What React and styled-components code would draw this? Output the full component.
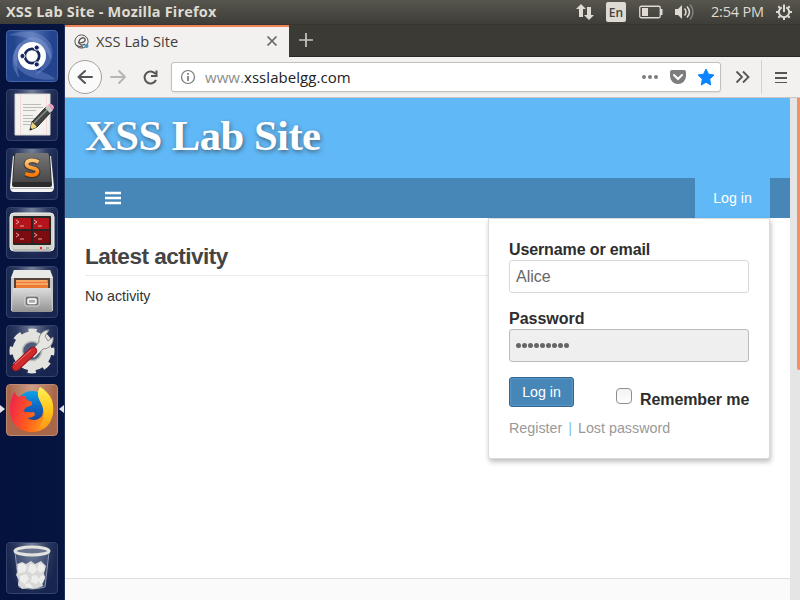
import React from "react";
import styled, { createGlobalStyle, css } from "styled-components";

const Global = createGlobalStyle`
  * { box-sizing: border-box; }
  html, body { margin: 0; overflow: hidden; }
  svg { display: block; flex: none; }
`;

const Desktop = styled.div`
  width: 800px;
  height: 600px;
  display: flex;
  flex-direction: column;
  overflow: hidden;
  background: #071640;
  font-family: "Liberation Sans", Arial, sans-serif;
`;

const TopPanel = styled.header`
  height: 24px;
  flex: none;
  display: flex;
  align-items: center;
  padding: 0 8px 0 6px;
  background: linear-gradient(#57554d, #3e3d38);
  color: #dfdbd2;
  font-family: "Open Sans", "Noto Sans", sans-serif;
`;

const WindowTitle = styled.div`
  flex: 1;
  font-size: 14.5px;
  font-weight: 700;
  line-height: 24px;
  letter-spacing: 0.19px;
  white-space: nowrap;
`;

const Indicators = styled.div`
  display: flex;
  align-items: center;
`;

const Language = styled.span`
  width: 20px;
  height: 20px;
  margin: 0 13px 0 12px;
  border-radius: 2px;
  background: #dfdbd2;
  color: #45443f;
  font: 600 12px/21px "Open Sans", sans-serif;
  text-align: center;
`;

const Volume = styled.div`
  margin-left: 12px;
`;

const Clock = styled.span`
  width: 53px;
  margin: 0 12px 0 16px;
  font-size: 14.5px;
  line-height: 24px;
  letter-spacing: -0.2px;
  white-space: nowrap;
`;

const Workspace = styled.div`
  flex: 1;
  display: flex;
  min-height: 0;
`;

const Launcher = styled.nav`
  width: 65px;
  flex: none;
  display: flex;
  flex-direction: column;
  align-items: center;
  gap: 7px;
  padding: 6px 1px 6px 0;
  border-right: 1px solid #22305c;
  background: linear-gradient(90deg, #04123d, #051540);
`;

const Tile = styled.div`
  position: relative;
  width: 52px;
  height: 52px;
  flex: none;
  border-radius: 4px;
  border: 1px solid ${(p) => p.$edge || "#34426a"};
  background: ${(p) => p.$fill || "radial-gradient(ellipse at 50% 0, #77819b, #2b385f 45%, #18264f 75%)"};
  ${(p) => p.$last && css`margin-top: auto;`}
  & > svg { margin: -1px; }
`;

const Pip = styled.i`
  position: absolute;
  top: 20px;
  border: 4.5px solid transparent;
  ${(p) => (p.$right
    ? css`right: -7px; border-left: 0; border-right: 5px solid #e4e4e8;`
    : css`left: -7px; border-right: 0; border-left: 5px solid #e4e4e8;`)}
`;

const Browser = styled.main`
  flex: 1;
  min-width: 0;
  display: flex;
  flex-direction: column;
`;

const TabStrip = styled.div`
  height: 33px;
  flex: none;
  display: flex;
  background: #3b3a35;
  border-top: 1px solid #35342f;
  border-bottom: 1px solid #292824;
`;

const Tab = styled.div`
  width: 224px;
  height: 32px;
  display: flex;
  align-items: center;
  padding: 0 11px 2px 9px;
  border-top: 2px solid #f08354;
  background: #f3f1f0;
`;

const TabTitle = styled.span`
  flex: 1;
  margin-left: 7px;
  font: 14.6px/28px "Open Sans", sans-serif;
  letter-spacing: 0.05px;
  color: #3f3e3b;
`;

const NewTab = styled.div`
  padding: 8px 10px;
`;

const Toolbar = styled.div`
  height: 41px;
  flex: none;
  display: flex;
  align-items: center;
  padding-left: 3px;
  background: #f3f1f0;
  border-bottom: 1px solid #c6c5c3;
`;

const BackButton = styled.div`
  width: 34px;
  height: 34px;
  display: grid;
  place-items: center;
  border: 1px solid #a2a19f;
  border-radius: 50%;
  background: #fbfafa;
`;

const AddressBar = styled.div`
  width: 550px;
  height: 30px;
  margin-left: 12px;
  display: flex;
  align-items: center;
  padding: 0 5px 0 8px;
  border: 1px solid #c3c1be;
  border-radius: 3px;
  background: #fff;
  box-shadow: 0 1px 2px rgba(0, 0, 0, 0.08);
`;

const Address = styled.span`
  flex: 1;
  margin-left: 9px;
  font: 15px/28px "Open Sans", sans-serif;
  letter-spacing: 0.05px;
  color: #222;
  span { color: #8c8c8c; }
`;

const Divider = styled.i`
  width: 1px;
  height: 34px;
  margin: 0 13px 0 11px;
  background: #d5d3d1;
`;

const Viewport = styled.div`
  flex: 1;
  min-height: 0;
  display: flex;
`;

const Page = styled.div`
  width: 725px;
  display: flex;
  flex-direction: column;
  background: #fff;
`;

const Scrollbar = styled.div`
  width: 10px;
  padding-left: 7px;
  background: #e5e5e5;
  &::before {
    content: "";
    display: block;
    height: 272px;
    border-radius: 0 0 0 2px;
    background: #f19069;
  }
`;

const Banner = styled.div`
  height: 80px;
  flex: none;
  padding-left: 20px;
  background: #60b8f7;
`;

const SiteName = styled.h1`
  margin: 0;
  font: 700 42.7px/76px "Liberation Serif", serif;
  letter-spacing: -0.54px;
  color: #fff;
  text-shadow: 1px 2px 4px rgba(51, 51, 51, 0.6);
`;

const NavBar = styled.div`
  position: relative;
  z-index: 1;
  height: 40px;
  flex: none;
  display: flex;
  align-items: center;
  justify-content: space-between;
  padding: 0 20px 0 40px;
  background: #4787b8;
`;

const LoginTab = styled.div`
  width: 75px;
  text-align: center;
  font-size: 14.2px;
  line-height: 40px;
  color: #fff;
  background: #60b8f7;
`;

const Content = styled.section`
  flex: 1;
  padding: 24px 20px 0;
`;

const Heading = styled.h2`
  margin: 0;
  height: 34px;
  border-bottom: 1px solid #ebebeb;
  font: 700 22.6px/30px "Liberation Sans", sans-serif;
  letter-spacing: -0.52px;
  color: #444;
`;

const Note = styled.p`
  margin: 11px 0 0;
  font-size: 14.2px;
  line-height: 18px;
  color: #333;
`;

const Footer = styled.footer`
  height: 22px;
  border-top: 1px solid #dedede;
  background: #fafafa;
`;

const LoginBox = styled.form`
  position: absolute;
  top: 40px;
  right: 20px;
  width: 282px;
  height: 241px;
  padding: 20px;
  border: 1px solid #dbdbdb;
  border-radius: 0 0 3px 3px;
  background: #fff;
  box-shadow: 1px 3px 5px rgba(0, 0, 0, 0.25);
`;

const Label = styled.label`
  display: block;
  font-size: 16px;
  font-weight: 700;
  line-height: 21px;
  letter-spacing: ${(p) => p.$spacing || "0"};
  color: #2d2d2d;
  white-space: nowrap;
`;

const Field = styled.input`
  display: block;
  width: 240px;
  height: 33px;
  margin: 0 0 15px;
  padding: 0 6px;
  border: 1px solid #d8d8d8;
  border-radius: 3px;
  outline: 0;
  background: #fff;
  font: 16px "Liberation Sans", sans-serif;
  color: #666;
`;

const MaskedField = styled.div`
  display: flex;
  align-items: center;
  gap: 1px;
  width: 240px;
  height: 33px;
  margin-bottom: 15px;
  padding: 0 6px;
  border: 1px solid #bbb;
  border-radius: 3px;
  background: #efefef;
  i { width: 5px; height: 5px; border-radius: 50%; background: #666; }
`;

const Actions = styled.div`
  display: flex;
  align-items: flex-start;
`;

const Submit = styled.button`
  width: 65px;
  height: 30px;
  flex: none;
  padding: 0;
  border: 1px solid #2f6792;
  border-radius: 3px;
  background: #4787b8;
  box-shadow: inset 0 0 1px 1px #5b97c4;
  font: 14.2px "Liberation Sans", sans-serif;
  color: #fff;
`;

const Check = styled.i`
  width: 16px;
  height: 16px;
  flex: none;
  margin: 11px 8px 0 42px;
  border: 1px solid #8f8f8f;
  border-radius: 4px;
  background: linear-gradient(#f2f2f2, #fff);
`;

const Remember = styled.div`
  padding-top: 12px;
`;

const Links = styled.div`
  display: flex;
  gap: 6px;
  margin-top: 8px;
  font-size: 14.3px;
  line-height: 20px;
  color: #999;
  white-space: nowrap;
  i { font-style: normal; color: #7fbfe9; }
`;

const Glyph = ({ w, h = w, box, children, ...rest }) => (
  <svg width={w} height={h} viewBox={box || `0 0 ${w} ${h}`} fill="none" {...rest}>{children}</svg>
);

const DashIcon = () => (
  <Glyph w={52}>
    <g fill="#8fa8e2" stroke="#a9bdec" strokeWidth=".5">
      <path opacity=".38" d="M13 47C1 33 7 12 27 7c11 2 18 10 18 22-4-9-10-15-20-15C13 16 7 30 13 47Z" />
      <path opacity=".32" d="M4 5c14-6 32-3 40 8 6 14-1 26-14 31 8-7 10-14 7-21C33 12 20 5 4 5Z" />
      <path opacity=".3" d="M49 49C33 51 16 46 9 34c-3-9 0-16 5-21-1 9 1 18 8 23 8 5 18 6 27 13Z" />
    </g>
    <circle cx="26" cy="26" r="14" fill="#fff" />
    <circle cx="26" cy="26" r="7.2" stroke="#14275f" strokeWidth="2.7" />
    <g fill="#14275f" stroke="#fff" strokeWidth="1">
      <circle cx="16.5" cy="26" r="2.6" /><circle cx="30.7" cy="17.6" r="2.6" /><circle cx="30.7" cy="34.4" r="2.6" />
    </g>
  </Glyph>
);

const EditorIcon = () => (
  <Glyph w={52}>
    <path d="M9 5h35v41H9z" fill="#f3f2ee" stroke="#d7d7d4" />
    <path d="M14.500 5v41M40.500 5v41" stroke="#f3dada" />
    <path d="M17 15.500h18M17 18.500h20M17 21.500h13M17 26.500h10M17 29.500h16M17 32.500h13M17 35.500h10" stroke="#bcbcb8" />
    <path d="m24 41 2-8L40 18l5 5-14 15Z" fill="#444644" stroke="#20201f" />
    <path d="m28 34 13-13" stroke="#8b8c89" strokeWidth="1.500" />
    <path d="m24 41 2-8 5 5Z" fill="#ecd37c" />
    <path d="m23.500 41.500 3-1-2-2Z" fill="#222" />
    <path d="m39 19 3-3 5 5-3 3Z" fill="#c9cac9" />
    <path d="m42 16 2-1.500q4 1 4 4.500l-1.500 2Z" fill="#f29cb9" />
  </Glyph>
);

const SublimeIcon = () => (
  <Glyph w={52}>
    <defs>
      <linearGradient id="key" x2="0" y2="1"><stop stopColor="#777" /><stop offset="1" stopColor="#484848" /></linearGradient>
      <linearGradient id="ess" x2="0" y2="1"><stop stopColor="#ffc878" /><stop offset="1" stopColor="#ff7600" /></linearGradient>
    </defs>
    <path d="M7 8h38l3 31q0 5-4 5H8q-4 0-4-5Z" fill="#f4f4f2" />
    <path d="M5 40.500h42" stroke="#bbb" />
    <path d="M8 7q0-2 2-2h32q2 0 2 2l2 30q0 2-2 2H8q-2 0-2-2Z" fill="#2c2c2c" />
    <path d="M9 7q0-2 2-2h30q2 0 2 2l2 27H7Z" fill="url(#key)" />
    <path d="M32.500 14.500c-5-3-12-2-12 2 0 5 11 3 11 7 0 5-7 5-12 2.500" stroke="#20160c" strokeWidth="6" opacity=".35" />
    <path d="M32.500 14c-5-3-12-2-12 2 0 5 11 3 11 7 0 5-7 5-12 2.500" stroke="url(#ess)" strokeWidth="3.600" />
  </Glyph>
);

const TerminatorIcon = () => (
  <Glyph w={52}>
    <rect x="4" y="6" width="44" height="38" rx="4" fill="#d5d5ce" stroke="#f4f4ef" />
    <path d="M7 43h38" stroke="#999" />
    <rect x="7" y="9" width="38" height="29" rx="1" fill="#252525" />
    <path d="M8 11h17v11H8zM27 11h16v11H27z" fill="#b4151b" />
    <path d="M8 24h17v12H8zM27 24h16v12H27z" fill="#7d0c11" />
    <path d="m10 13 3 2-3 2m4 2h4m10-6 3 2-3 2m4 2h4M10 26l3 2-3 2m4 2h4m10-6 3 2-3 2m4 2h4" stroke="#f6c8c9" strokeWidth=".8" />
    <circle cx="35" cy="41" r="1.200" fill="#f22" /><path d="M40 40h3v2h-3z" fill="#aaa" />
  </Glyph>
);

const FilesIcon = () => (
  <Glyph w={52}>
    <defs><linearGradient id="cab" x2="0" y2="1"><stop stopColor="#ddd" /><stop offset="1" stopColor="#929292" /></linearGradient></defs>
    <path d="M8 4h36l3 8v33H5V12Z" fill="#c7c7c4" />
    <path d="M8 4h36l3 8H5Z" fill="#e9e9e6" />
    <path d="M8 12h36v11H8z" fill="#55433a" />
    <path d="M10 14h32v8H10z" fill="#ed7b30" /><path d="M10 15h31M10 18h32" stroke="#ffd39d" />
    <path d="M7 22h38l1 24H6Z" fill="url(#cab)" />
    <rect x="19" y="30" width="14" height="10" rx="2" fill="#777" stroke="#ddd" />
    <rect x="22" y="33" width="8" height="4.500" rx="1" fill="#aaa" stroke="#fff" strokeWidth="1.500" />
  </Glyph>
);

const SettingsIcon = () => (
  <Glyph w={52}>
    <circle cx="26" cy="26" r="14.500" stroke="#e2e2df" strokeWidth="10" />
    <circle cx="26" cy="26" r="20" stroke="#e2e2df" strokeWidth="5" strokeDasharray="8 7.700" strokeDashoffset="4" />
    <circle cx="26" cy="26" r="9.500" fill="#4c5a7e" stroke="#b8b8b5" strokeWidth="1.500" />
    <path d="m24 28 9-11c-1-7 4-12 10-12l-4 6 3 5 5-4c1 7-4 12-10 12L28 33Z" fill="#e5e5e2" stroke="#8e8e8b" />
    <path d="M10 42 27 26" stroke="#9b1218" strokeWidth="8.500" strokeLinecap="round" />
    <path d="M10 42 27 26" stroke="#cf2a2c" strokeWidth="6.500" strokeLinecap="round" />
    <path d="M9 39 25 25" stroke="#ef7776" strokeWidth="1" />
  </Glyph>
);

const FirefoxIcon = () => (
  <Glyph w={52}>
    <defs>
      <linearGradient id="globe" x2="0" y2="1"><stop stopColor="#0ba4e8" /><stop offset=".5" stopColor="#1166c4" /><stop offset="1" stopColor="#1b3f92" /></linearGradient>
      <linearGradient id="fox" x1="0" x2="1" y1=".4" y2=".7"><stop stopColor="#f0254b" /><stop offset=".45" stopColor="#ff5a1e" /><stop offset="1" stopColor="#ffb018" /></linearGradient>
      <linearGradient id="tail" x2="0" y2="1"><stop stopColor="#fff35b" /><stop offset=".5" stopColor="#ffc81c" /><stop offset="1" stopColor="#ff9a16" /></linearGradient>
    </defs>
    <circle cx="26" cy="23" r="16" fill="url(#globe)" />
    <path d="M9 8q1 4 4 5 3-2 6-1l2 4 5 2v3l-6 2.500-3 3.500q5 2 11 1l1 3q-3 3-8 3 9 5 15-2 3-8-2-16-1-8 0-13 13 8 13 18c2 16-7 27-21 27C12 48 4 38 4 26 4 17 6 12 9 8Z" fill="url(#fox)" />
    <path d="M34 3c10 6 14 14 13 25-1 8-6 15-15 17 6-7 8-17 3-26-4-7-4-11-1-16Z" fill="url(#tail)" />
  </Glyph>
);

const TrashIcon = () => (
  <Glyph w={52}>
    <path d="M9 10h34l-4 35q-13 4-26 0Z" fill="#8492ae" fillOpacity=".3" stroke="#8d98b2" />
    <path d="m11 22 5-2 4 2 5-3 4 3 6-3 5 5-2 7 1 6-3 3 1 4-5 2-5 1-5-1-6 1-4-4 1-5-3-5 2-5Z" fill="#d8d8d7" />
    <g fill="#ededec">
      <path d="m12 23 5-2 4 4-2 5-6 1-2-4ZM24 22l5 1 2 5-4 4-5-3ZM33 21l5 2 1 5-5 3-3-4ZM14 34l6-2 3 5-4 5-5-3ZM26 34l4-1 4 5-4 4-5-2ZM35 33l4 1-2 7-3 1-1-5ZM19 42l5-1 3 5-7-1Z" />
    </g>
    <ellipse cx="26" cy="9" rx="17" ry="4" fill="#68748f" stroke="#e3e3de" strokeWidth="3" />
  </Glyph>
);

export default function App() {
  return (
    <Desktop>
      <Global />
      <TopPanel>
        <WindowTitle>XSS Lab Site - Mozilla Firefox</WindowTitle>
        <Indicators>
          <Glyph w={18} h={18}><path d="m5 1 5 5H7v8H3V6H0Zm8 16-5-5h3V4h4v8h3Z" fill="#dfdbd2" /></Glyph>
          <Language>En</Language>
          <Glyph w={24} h={14}><rect x=".75" y="1.250" width="20.500" height="11.500" rx="1.500" stroke="#dfdbd2" strokeWidth="1.300" /><path d="M3 3h6v8H3zM21 4h2.500v6H21z" fill="#dfdbd2" /></Glyph>
          <Volume>
            <Glyph w={20} h={18}><path d="M0 6h3l4-4v14l-4-4H0Z" fill="#dfdbd2" /><path d="M9.500 5.500q3 3.500 0 7" stroke="#dfdbd2" strokeWidth="1.500" /><path d="M12 3.500q5 5.500 0 11" stroke="#dfdbd2" strokeWidth="1.500" /><path d="M15 1.500q6 7.500 0 15" stroke="#85827a" strokeWidth="1.500" /></Glyph>
          </Volume>
        </Indicators>
        <Clock>2:54 PM</Clock>
        <Glyph w={16} box="-8 -8 16 16" stroke="#dfdbd2" strokeWidth="2">
          <path d="M-2.200-4.700A5.200 5.200 0 1 0 2.200-4.700M0-7.500V0" />
          <path d="m-4-4-1.700-1.700M4-4l1.700-1.700M-5 0h-3M5 0h3M-4 4l-1.700 1.700M4 4l1.700 1.700M0 5v3" />
        </Glyph>
      </TopPanel>
      <Workspace>
        <Launcher>
          <Tile $edge="#4565a8" $fill="radial-gradient(ellipse at 50% 0, #5575b4, #2546929e 55%), #1d3e88"><DashIcon /></Tile>
          <Tile><EditorIcon /></Tile>
          <Tile><SublimeIcon /></Tile>
          <Tile><TerminatorIcon /></Tile>
          <Tile><FilesIcon /></Tile>
          <Tile><SettingsIcon /></Tile>
          <Tile $edge="#bd8871" $fill="radial-gradient(ellipse at 50% 0, #cfa08a, #a8674a 65%)"><FirefoxIcon /><Pip /><Pip $right /></Tile>
          <Tile $last><TrashIcon /></Tile>
        </Launcher>
        <Browser>
          <TabStrip>
            <Tab>
              <Glyph w={15}><circle cx="7.500" cy="7.500" r="6.600" stroke="#555" /><path d="M4 8.500c4 1 8-1 7-3.500s-6-1-6 3c0 3 3 4 6 2M2 11c3 2 4 2 7 2" stroke="#555" strokeWidth="1.300" /><circle cx="12.500" cy="12" r="2" fill="#3e94c6" /></Glyph>
              <TabTitle>XSS Lab Site</TabTitle>
              <Glyph w={12}><path d="m1.500 1.500 9 9m0-9-9 9" stroke="#666" strokeWidth="1.700" /></Glyph>
            </Tab>
            <NewTab><Glyph w={14}><path d="M7 0v14M0 7h14" stroke="#c9c8c2" strokeWidth="1.700" /></Glyph></NewTab>
          </TabStrip>
          <Toolbar>
            <BackButton><Glyph w={16}><path d="M15 8H1.500m6.500-6L1.500 8 8 14" stroke="#555" strokeWidth="2" strokeLinecap="round" strokeLinejoin="round" /></Glyph></BackButton>
            <Glyph w={32} h={16}><path d="M9 8h14m-6-6 6 6-6 6" stroke="#b7b6b4" strokeWidth="2" strokeLinecap="round" strokeLinejoin="round" /></Glyph>
            <Glyph w={25} h={16}><path d="M21.500 5A6 6 0 1 0 22 11M22.500 1.500V7H17" stroke="#555" strokeWidth="2" /></Glyph>
            <AddressBar>
              <Glyph w={16}><circle cx="8" cy="8" r="6.500" stroke="#777" strokeWidth="1.200" /><path d="M8 7v5M8 4v1.700" stroke="#777" strokeWidth="1.700" /></Glyph>
              <Address><span>www.</span>xsslabelgg.com</Address>
              <Glyph w={73} h={18}><g fill="#7d7d7d"><circle cx="2" cy="9" r="2" /><circle cx="8" cy="9" r="2" /><circle cx="14" cy="9" r="2" /><path d="M30 2h12q2 0 2 2v4a8 8 0 0 1-16 0V4q0-2 2-2Z" /></g><path d="m32 7 4 4 4-4" stroke="#fff" strokeWidth="2" strokeLinecap="round" /><path d="m64 1 2.500 5.200 5.500.8-4.300 4 1 6-4.700-2.800-4.700 2.800 1-6L56 7l5.500-.8Z" fill="#0a84ff" stroke="#0a84ff" strokeLinejoin="round" /></Glyph>
            </AddressBar>
            <Glyph w={29} h={14}><path d="m15.500 1.500 5.500 5.500-5.500 5.500m6.500-11 5.500 5.500-5.500 5.500" stroke="#555" strokeWidth="1.800" /></Glyph>
            <Divider />
            <Glyph w={12}><path d="M0 2h12M0 7h12M0 12h12" stroke="#555" strokeWidth="1.800" /></Glyph>
          </Toolbar>
          <Viewport>
            <Page>
              <Banner><SiteName>XSS Lab Site</SiteName></Banner>
              <NavBar>
                <Glyph w={16} h={14}><path d="M0 2h16M0 7h16M0 12h16" stroke="#fff" strokeWidth="2.700" /></Glyph>
                <LoginTab>Log in</LoginTab>
                <LoginBox onSubmit={(e) => e.preventDefault()}>
                  <Label $spacing="-0.12px">Username or email</Label>
                  <Field defaultValue="Alice" />
                  <Label>Password</Label>
                  <MaskedField>{Array.from({ length: 9 }, (_, i) => <i key={i} />)}</MaskedField>
                  <Actions>
                    <Submit>Log in</Submit>
                    <Check />
                    <Remember><Label $spacing="-0.1px">Remember me</Label></Remember>
                  </Actions>
                  <Links><span>Register</span><i>|</i><span>Lost password</span></Links>
                </LoginBox>
              </NavBar>
              <Content>
                <Heading>Latest activity</Heading>
                <Note>No activity</Note>
              </Content>
              <Footer />
            </Page>
            <Scrollbar />
          </Viewport>
        </Browser>
      </Workspace>
    </Desktop>
  );
}
